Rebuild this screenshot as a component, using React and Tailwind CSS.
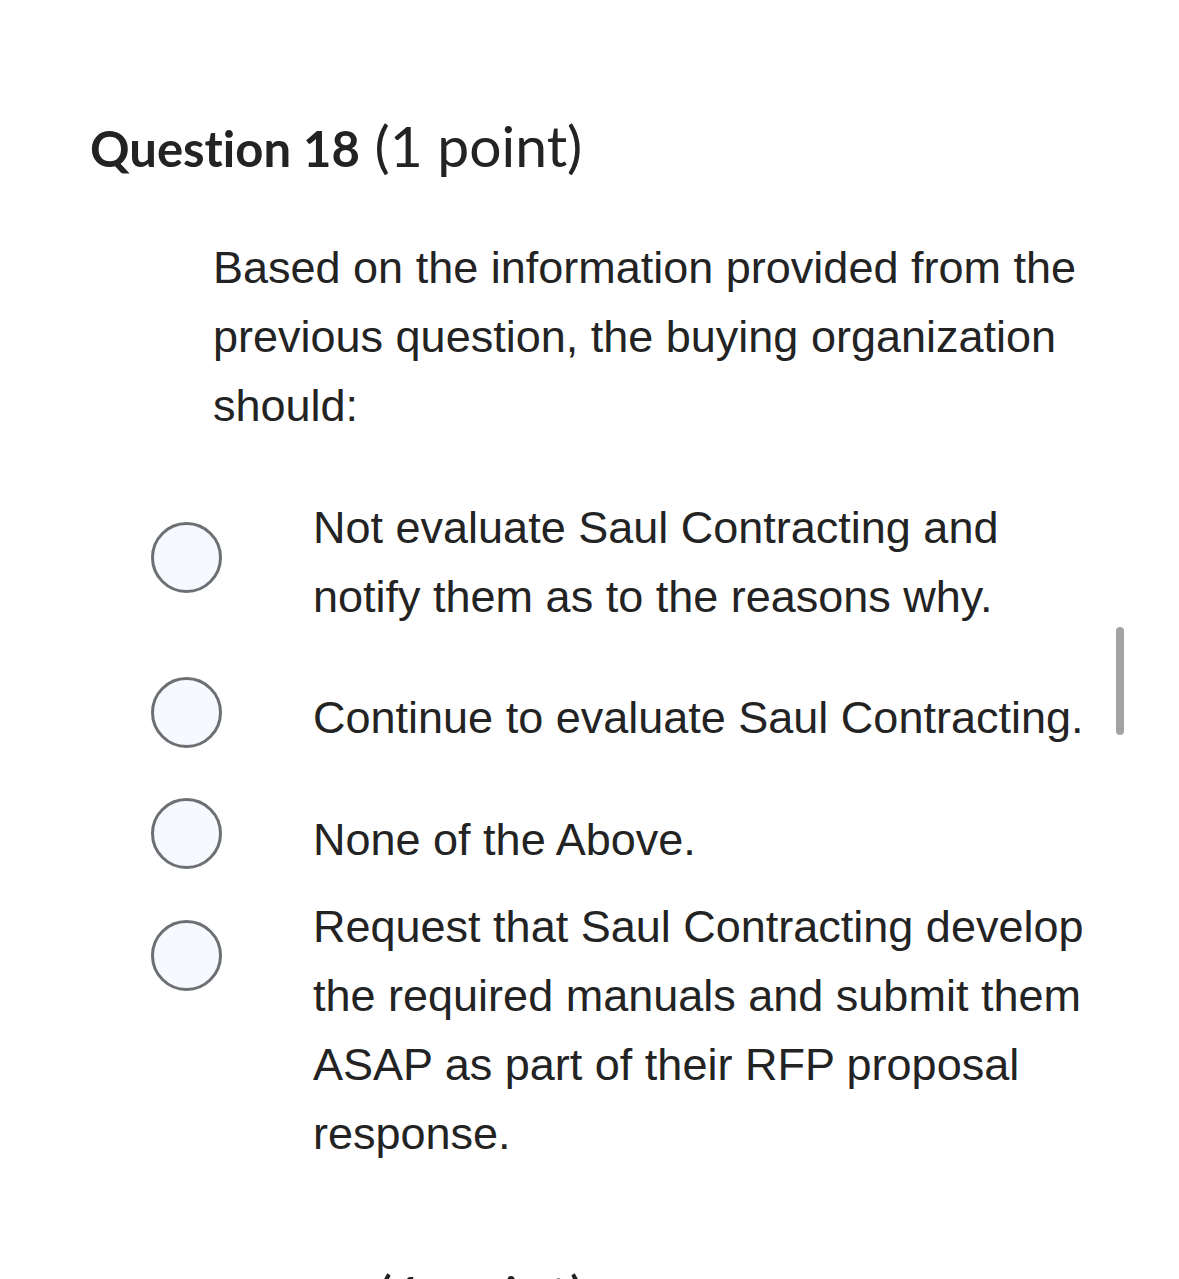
import React from "react";

function Radio({ mt }) {
  return (
    <div className={`shrink-0 ${mt}`}>
      <div className="w-[71px] h-[71px] rounded-full border-[3px] border-[#6d7073] bg-[#f7f9ff]" />
    </div>
  );
}

function Option({ mtRow, mtRadio, children }) {
  return (
    <div className={`flex items-start pl-[151px] ${mtRow}`}>
      <Radio mt={mtRadio} />
      <div className="ml-[91px] w-[800px] text-[45px] leading-[69px] text-[#232323]" style={{ fontFamily: '"Liberation Sans", Arial, sans-serif' }}>
        {children}
      </div>
    </div>
  );
}

export default function App() {
  return (
    <div className="relative w-[1179px] h-[1279px] overflow-hidden bg-white">
      <div
        className="pt-[115px] pl-[90px] text-[57px] leading-[60px] text-[#232323] whitespace-nowrap [font-variant-ligatures:none]"
        style={{ fontFamily: 'Lato, "Open Sans", sans-serif' }}
      >
        <span className="font-bold text-[49px]">Question 18</span> (1 point)
      </div>

      <div
        className="mt-[55px] ml-[213px] w-[890px] text-[45px] leading-[69px] text-[#232323]"
        style={{ fontFamily: '"Liberation Sans", Arial, sans-serif' }}
      >
        Based on the information provided from the previous question, the buying organization should:
      </div>

      <Option mtRow="mt-[53px]" mtRadio="mt-[29px]">
        Not evaluate Saul Contracting and notify them as to the reasons why.
      </Option>
      <Option mtRow="mt-[52px]" mtRadio="mt-[-6px]">
        Continue to evaluate Saul Contracting.
      </Option>
      <Option mtRow="mt-[53px]" mtRadio="mt-[-7px]">
        None of the Above.
      </Option>
      <Option mtRow="mt-[18px]" mtRadio="mt-[28px]">
        Request that Saul Contracting develop the required manuals and submit them ASAP as part of their RFP proposal response.
      </Option>

      <div
        className="mt-[97px] pl-[377px] text-[57px] leading-[60px] text-[#232323] whitespace-nowrap [font-variant-ligatures:none]"
        style={{ fontFamily: 'Lato, "Open Sans", sans-serif' }}
      >
        (1 point)
      </div>

      <div className="absolute left-[1116px] top-[627px] w-[8px] h-[108px] rounded-full bg-[#a3a3a3]" />
    </div>
  );
}
